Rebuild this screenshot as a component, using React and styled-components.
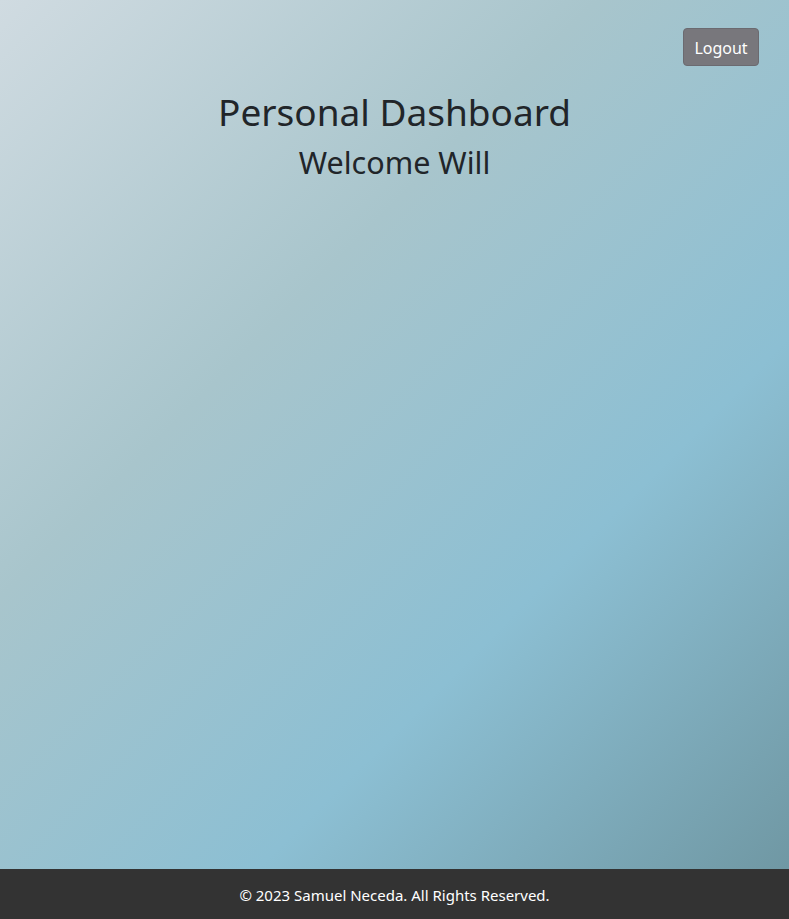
import React from "react";
import styled, { createGlobalStyle } from "styled-components";

const GlobalStyle = createGlobalStyle`
  html, body, #root {
    margin: 0;
    padding: 0;
    height: 100%;
  }
  body {
    font-family: "Noto Sans", "Open Sans", sans-serif;
    color: #212529;
  }
`;

const Page = styled.div`
  min-height: 100vh;
  display: flex;
  flex-direction: column;
  background: linear-gradient(
    135deg,
    #d0dbe1 0%,
    #a8c5cc 35%,
    #8cbfd3 66%,
    #6d949f 100%
  );
`;

const Main = styled.main`
  flex: 1;
  display: flex;
  flex-direction: column;
  padding: 28px 30px 0;
`;

const TopBar = styled.div`
  display: flex;
  justify-content: flex-end;
`;

const LogoutButton = styled.button`
  font-family: inherit;
  font-size: 16px;
  color: #fff;
  background-color: #78777c;
  border: 1px solid #6b6a70;
  border-radius: 4px;
  padding: 2px 0 0;
  height: 38px;
  width: 76px;
  cursor: pointer;
`;

const Header = styled.header`
  text-align: center;
  margin-top: 24px;
`;

const Title = styled.h1`
  margin: 0 0 10px;
  font-size: 37px;
  font-weight: 400;
  line-height: 44px;
`;

const Subtitle = styled.h2`
  margin: 0;
  font-size: 30.5px;
  font-weight: 400;
  line-height: 37px;
`;

const Footer = styled.footer`
  height: 50px;
  background-color: #333333;
  color: #fff;
  display: flex;
  align-items: center;
  justify-content: center;
  font-size: 15px;
  padding-top: 2px;
  box-sizing: border-box;
`;

export default function App() {
  return (
    <>
      <GlobalStyle />
      <Page>
        <Main>
          <TopBar>
            <LogoutButton>Logout</LogoutButton>
          </TopBar>
          <Header>
            <Title>Personal Dashboard</Title>
            <Subtitle>Welcome Will</Subtitle>
          </Header>
        </Main>
        <Footer>© 2023 Samuel Neceda. All Rights Reserved.</Footer>
      </Page>
    </>
  );
}
